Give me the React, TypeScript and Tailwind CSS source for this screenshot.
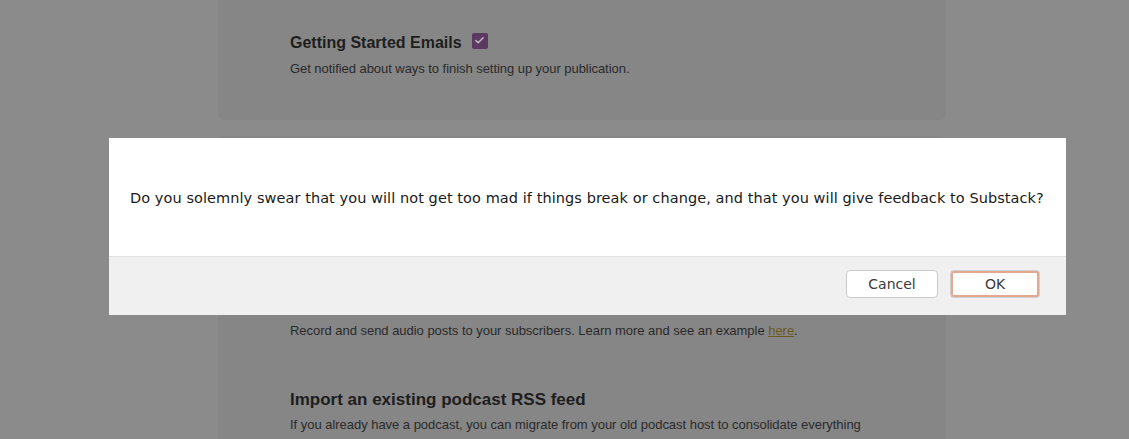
import { Check } from "lucide-react";

const sans = { fontFamily: '"Liberation Sans", Arial, sans-serif' };
const dialogFont = { fontFamily: '"DejaVu Sans", "Liberation Sans", sans-serif' };

function Section({
  title,
  children,
  checked,
}: {
  title: string;
  children: React.ReactNode;
  checked?: boolean;
}) {
  return (
    <div>
      <div className="flex items-center gap-[10px]">
        <h3 className="text-[16px] leading-[22px] font-bold text-[#1e1e1e]">{title}</h3>
        {checked && (
          <span className="w-[16px] h-[16px] rounded-[2px] bg-[#5b3960] flex items-center justify-center -mt-[5px]">
            <Check className="w-[11px] h-[11px] text-[#c9bccb]" strokeWidth={3} />
          </span>
        )}
      </div>
      <p className="mt-[6px] text-[13px] leading-[18px] text-[#2a2a2a]">{children}</p>
    </div>
  );
}

export default function App() {
  return (
    <div className="relative w-[1129px] h-[439px] overflow-hidden bg-[#8b8b8b]" style={sans}>
      {/* Settings page behind the dim overlay */}
      <div className="w-[728px] ml-[218px] flex flex-col gap-[16px]">
        <div className="bg-[#868686] rounded-b-[6px] pl-[72px] pt-[32px] pb-[42px]">
          <Section title="Getting Started Emails" checked>
            <span className="tracking-[-0.05px]">Get notified about ways to finish setting up your publication.</span>
          </Section>
        </div>

        <div className="bg-[#868686] rounded-t-[6px] pl-[72px] pt-[158px] pb-[40px] flex flex-col gap-[49px]">
          <Section title="Audio posts">
            <span className="tracking-[-0.03px]">
              Record and send audio posts to your subscribers. Learn more and see an example{" "}
              <a href="#" className="text-[#6d5b1c] underline">
                here
              </a>
              .
            </span>
          </Section>
          <div>
            <h3 className="text-[17px] leading-[22px] font-bold text-[#1e1e1e]">
              Import an existing podcast RSS feed
            </h3>
            <p className="mt-[5px] text-[13px] leading-[18px] text-[#2a2a2a] tracking-[-0.03px]">
              If you already have a podcast, you can migrate from your old podcast host to consolidate everything
            </p>
          </div>
        </div>
      </div>

      {/* Confirm dialog */}
      <div
        className="absolute left-[109px] top-[138px] w-[957px] bg-white flex flex-col"
        style={dialogFont}
      >
        <div className="h-[118px] flex items-center pl-[21px] pt-[3px]">
          <p className="text-[14.5px] text-[#1a1a1a] tracking-[0.07px]">
            Do you solemnly swear that you will not get too mad if things break or change, and that you will give
            feedback to Substack?
          </p>
        </div>
        <div className="h-[59px] bg-[#f0f0f0] border-t border-[#e2e2e2] flex items-center justify-end gap-[13px] pr-[27px] pb-[4px]">
          <button className="w-[92px] h-[28px] rounded-[4px] border border-[#cbcbcb] bg-white text-[14px] text-[#3a3a3a]">
            Cancel
          </button>
          <button className="w-[88px] h-[26px] rounded-[3px] border-2 border-[#e4a790] bg-white text-[14px] text-[#3a3a3a] shadow-[0_0_0_1px_#d0d0d0]">
            OK
          </button>
        </div>
      </div>
    </div>
  );
}
